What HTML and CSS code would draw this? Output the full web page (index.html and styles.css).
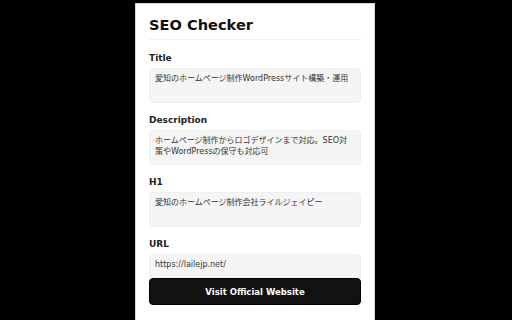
FILE: index.html
```html
<!DOCTYPE html>
<html lang="ja">
<head>
    <meta charset="UTF-8">
    <meta name="viewport" content="width=device-width, initial-scale=1.0">
    <title>SEO Checker</title>
    <link rel="stylesheet" href="styles.css">
</head>
<body>
    <div class="panel">
        <h1 class="heading">SEO Checker</h1>

        <div class="field">
            <div class="label">Title</div>
            <div class="value">愛知のホームページ制作WordPressサイト構築・運用</div>
        </div>

        <div class="field">
            <div class="label">Description</div>
            <div class="value">ホームページ制作からロゴデザインまで対応。SEO対策やWordPressの保守も対応可</div>
        </div>

        <div class="field">
            <div class="label">H1</div>
            <div class="value">愛知のホームページ制作会社ライルジェイピー</div>
        </div>

        <div class="field">
            <div class="label">URL</div>
            <div class="value">https://lailejp.net/</div>
        </div>

        <button class="visit">Visit Official Website</button>
    </div>
</body>
</html>
```

FILE: styles.css
```css
html, body {
    margin: 0;
    padding: 0;
    height: 100%;
    overflow: hidden;
}

body {
    background-color: #000;
    font-family: "DejaVu Sans", "Noto Sans CJK JP", sans-serif;
}

.panel {
    box-sizing: border-box;
    width: 240px;
    min-height: 330px;
    margin: 3px 0 0 calc(50% - 121px);
    padding: 12px 13px 20px;
    background-color: #fff;
    border: 1px solid #d8d8d8;
}

.heading {
    margin: 0 0 12px;
    padding-bottom: 6px;
    font-size: 14.6px;
    font-weight: bold;
    color: #111;
    border-bottom: 1px dotted #e6e6e6;
}

.field {
    margin-bottom: 11px;
}

.label {
    height: 12px;
    line-height: 12px;
    margin-bottom: 4px;
    font-size: 9px;
    font-weight: bold;
    color: #222;
}

.value {
    box-sizing: border-box;
    min-height: 35px;
    padding: 4px 5px;
    font-size: 8px;
    line-height: 11px;
    color: #333;
    background-color: #f5f5f5;
    border: 1px solid #efefef;
    border-radius: 4px;
}

.visit {
    display: block;
    width: 100%;
    height: 27px;
    margin-top: -22px;
    position: relative;
    font-family: "DejaVu Sans", sans-serif;
    font-size: 8.5px;
    font-weight: bold;
    color: #fff;
    background-color: #121212;
    border: 1px solid #000;
    border-radius: 4px;
    cursor: pointer;
}

.visit:hover {
    background-color: #333;
}
```
